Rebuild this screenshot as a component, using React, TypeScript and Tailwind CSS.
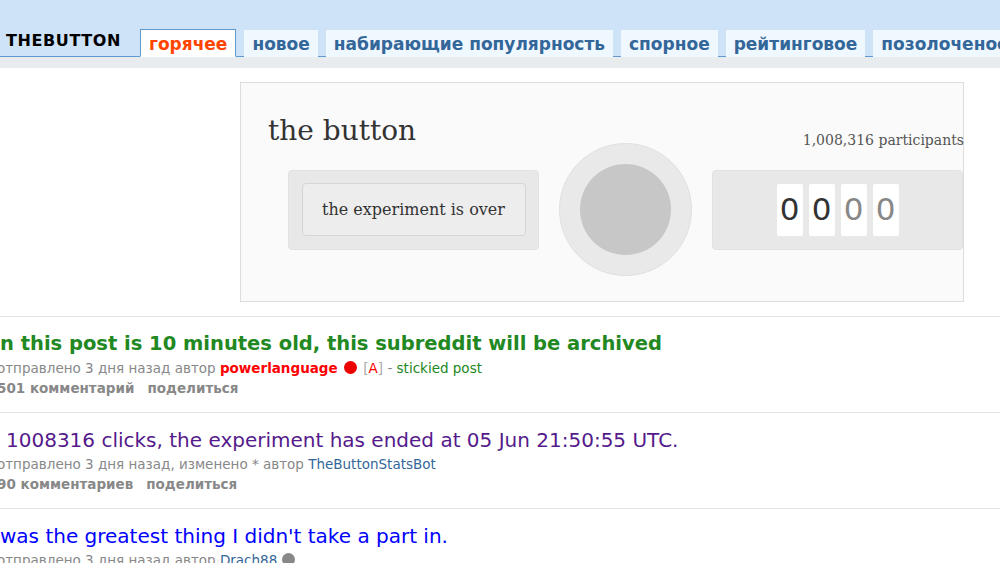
const sans = { fontFamily: '"DejaVu Sans", Verdana, sans-serif' };

const tabs = ['новое', 'набирающие популярность', 'спорное', 'рейтинговое', 'позолоченое'];

function Header() {
  return (
    <div className="bg-[#cee3f8] h-[57px] border-b border-[#5f99cf] flex items-end pl-[6px]" style={sans}>
      <div className="text-[16px] font-bold text-black tracking-[0.6px] mb-[3px] mr-[19px]">THEBUTTON</div>
      <div className="flex gap-[8px] items-end -mb-px">
        <div className="bg-white border border-[#5f99cf] border-b-white px-[8px] pt-[3px] h-[28px] flex items-center text-[17px] font-bold text-[#ff4500]">
          горячее
        </div>
        {tabs.map((t) => (
          <div key={t} className="bg-[#eff7ff] px-[8px] pt-[3px] h-[27px] flex items-center text-[17px] font-bold text-[#369] whitespace-nowrap">
            {t}
          </div>
        ))}
      </div>
    </div>
  );
}

function Digit({ v, dim }: { v: string; dim?: boolean }) {
  return (
    <div
      className={`w-[26px] h-[52px] bg-white rounded-[2px] flex items-center justify-center text-[31px] ${dim ? 'text-[#888]' : 'text-[#333]'}`}
      style={sans}
    >
      {v}
    </div>
  );
}

function ButtonPanel() {
  const serif = { fontFamily: 'Georgia, "DejaVu Serif", serif' };
  return (
    <div className="ml-[240px] mt-[14px] w-[724px] h-[220px] border border-[#ddd] bg-[#fafafa]" style={serif}>
      <div className="flex items-end justify-between px-[27px] pt-[30px]">
        <div className="text-[28px] text-[#333] leading-[36px]">the button</div>
        <div className="text-[14px] text-[#555] mb-[-2px] mr-[-28px]">1,008,316 participants</div>
      </div>
      <div className="flex items-center mt-[-6px] pl-[47px]">
        <div className="w-[251px] h-[80px] bg-[#e8e8e8] border border-[#e2e2e2] rounded-[4px] flex items-center justify-center">
          <div className="w-[224px] h-[53px] bg-[#ededed] border border-[#d5d5d5] rounded-[4px] flex items-center justify-center text-[16px] text-[#333]">
            the experiment is over
          </div>
        </div>
        <div className="ml-[20px] w-[133px] h-[133px] rounded-full bg-[#e9e9e9] border border-[#e0e0e0] flex items-center justify-center">
          <div className="w-[91px] h-[91px] rounded-full bg-[#c7c7c7]" />
        </div>
        <div className="ml-[20px] w-[251px] h-[80px] bg-[#e8e8e8] border border-[#e2e2e2] rounded-[4px] flex items-center justify-center gap-[6px]">
          <Digit v="0" />
          <Digit v="0" />
          <Digit v="0" dim />
          <Digit v="0" dim />
        </div>
      </div>
    </div>
  );
}

function Post({
  title,
  titleClass,
  tagline,
  buttons,
}: {
  title: string;
  titleClass: string;
  tagline: React.ReactNode;
  buttons?: string;
}) {
  return (
    <div className="border-t border-[#e5e5e5] pt-[15px] pb-[14px]" style={sans}>
      <div className={`leading-[24px] whitespace-nowrap ${titleClass}`}>{title}</div>
      <div className="text-[13.5px] leading-[19px] text-[#888] whitespace-nowrap mt-[3px] ml-[-3px]">{tagline}</div>
      {buttons && (
        <div className="text-[13.5px] leading-[19px] text-[#888] font-bold whitespace-nowrap mt-[1px] ml-[-3px] flex gap-[13px]">
          <span>{buttons}</span>
          <span>поделиться</span>
        </div>
      )}
    </div>
  );
}

export default function App() {
  return (
    <div className="w-[1000px] h-[563px] overflow-hidden bg-white">
      <Header />
      <div className="h-[11px] bg-[#e8ecef]" />
      <ButtonPanel />
      <div className="mt-[14px]">
        <Post
          title="n this post is 10 minutes old, this subreddit will be archived"
          titleClass="text-[19.5px] text-[#228822] font-bold"
          tagline={
            <>
              отправлено 3 дня назад автор <span className="text-[#ff0000] font-bold">powerlanguage</span>{' '}
              <span className="inline-block w-[13px] h-[13px] rounded-full bg-[#e00] align-[-1px] mx-[2px]" />{' '}
              <span className="text-[#aaa]">[</span>
              <span className="text-[#f00]">A</span>
              <span className="text-[#aaa]">]</span> - <span className="text-[#228822]">stickied post</span>
            </>
          }
          buttons="501 комментарий"
        />
        <Post
          title="1008316 clicks, the experiment has ended at 05 Jun 21:50:55 UTC."
          titleClass="text-[20px] text-[#551a8b] pl-[6px]"
          tagline={
            <>
              отправлено 3 дня назад, изменено * автор <span className="text-[#369]">TheButtonStatsBot</span>
            </>
          }
          buttons="90 комментариев"
        />
        <Post
          title="was the greatest thing I didn't take a part in."
          titleClass="text-[20px] text-[#0000ff]"
          tagline={
            <>
              отправлено 3 дня назад автор <span className="text-[#369]">Drach88</span>{' '}
              <span className="inline-block w-[13px] h-[13px] rounded-full bg-[#888] align-[-1px]" />
            </>
          }
        />
      </div>
    </div>
  );
}
